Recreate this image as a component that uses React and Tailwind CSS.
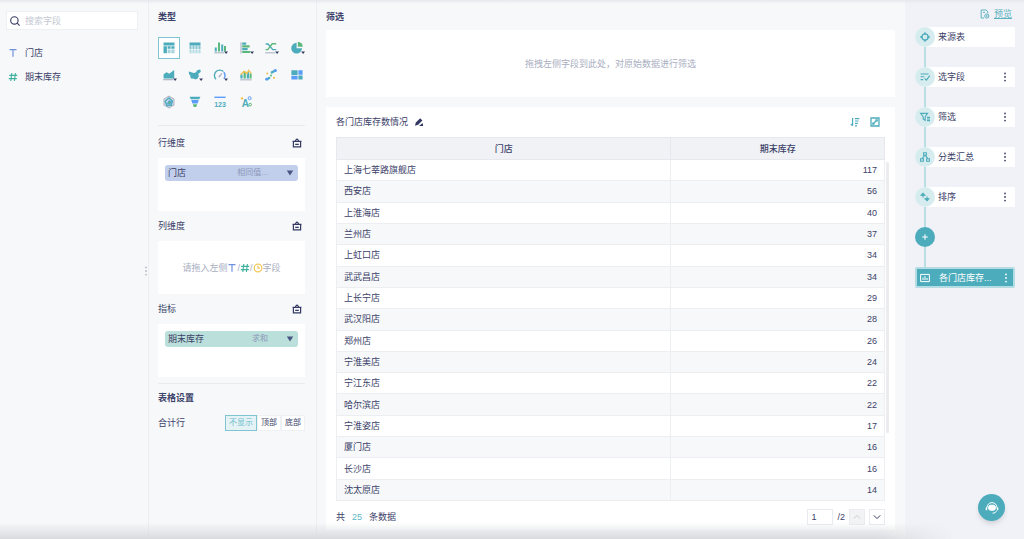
import React, { useState } from 'react';

const fieldList = [
  { name: '门店', kind: 'text' },
  { name: '期末库存', kind: 'number' },
];

const rows = [
  ['上海七莘路旗舰店', 117],
  ['西安店', 56],
  ['上淮海店', 40],
  ['兰州店', 37],
  ['上虹口店', 34],
  ['武武昌店', 34],
  ['上长宁店', 29],
  ['武汉阳店', 28],
  ['郑州店', 26],
  ['宁淮美店', 24],
  ['宁江东店', 22],
  ['哈尔滨店', 22],
  ['宁淮姿店', 17],
  ['厦门店', 16],
  ['长沙店', 16],
  ['沈太原店', 14],
];

const TEAL = '#4dacbc';
const GREEN = '#5cb87a';
const BLUE = '#5a9cf8';
const GRAY = '#b4b9c8';
const YELLOW = '#f2c04e';
const NAVY = '#343a63';

const chartTypes = [
  {
    name: '分组表',
    art: (
      <>
        <path d="M2.5 2.5h11v3h-11z" fill={TEAL} />
        <path d="M2.5 6.2h3.4v7h-3.4z" fill={TEAL} />
        <path d="M6.6 6.2h3v2.6h-3zM10.3 6.2h3.2v2.6h-3.2z" fill={TEAL} />
        <path d="M6.6 9.6h3v3.6h-3zM10.3 9.6h3.2v3.6h-3.2z" fill="#a6d5de" />
      </>
    ),
  },
  {
    name: '明细表',
    art: (
      <>
        <path d="M2.5 2.5h11v3h-11z" fill={TEAL} />
        <path d="M2.5 5.8h2v3.4h-2zM5.5 5.8h2v3.4h-2zM8.5 5.8h2v3.4h-2zM11.5 5.8h2v3.4h-2z" fill="#83c4cf" />
        <path d="M2.5 9.9h2v3.3h-2zM5.5 9.9h2v3.3h-2zM8.5 9.9h2v3.3h-2zM11.5 9.9h2v3.3h-2z" fill="#b3dbe2" />
      </>
    ),
  },
  {
    name: '柱形图',
    more: true,
    art: (
      <>
        <path d="M2.8 7.5h2v4h-2zM9.2 4.5h2v7h-2z" fill={TEAL} />
        <path d="M6 2.4h2v9.1h-2zM12 6h2v5.5h-2z" fill={GREEN} />
        <path d="M2.2 12.2h10v1.2h-10z" fill={GRAY} />
      </>
    ),
  },
  {
    name: '条形图',
    more: true,
    art: (
      <>
        <path d="M2.4 2.2h1.2v11.2h-1.2z" fill={GRAY} />
        <path d="M4.2 2.6h4v2.2h-4zM4.2 8.1h5.4v2.2h-5.4z" fill={TEAL} />
        <path d="M4.2 5.3h7.4v2.2h-7.4zM4.2 10.9h8v2.2h-8z" fill={GREEN} />
      </>
    ),
  },
  {
    name: '折线图',
    more: true,
    art: (
      <>
        <path d="M2.6 4h2.4l4.8 5.6h3.4" fill="none" stroke={TEAL} strokeWidth="1.4" />
        <path d="M2.6 9.6h2.2l4.4-5.8h4" fill="none" stroke={GREEN} strokeWidth="1.4" />
        <path d="M2.2 12.2h10v1.2h-10z" fill={GRAY} />
      </>
    ),
  },
  {
    name: '饼图',
    more: true,
    art: (
      <>
        <path d="M7.6 2.8v5.4h5.4a5.4 5.4 0 1 1-5.4-5.4z" fill={TEAL} />
        <path d="M8.8 1.8a5.2 5.2 0 0 1 5 5h-5z" fill={GREEN} />
      </>
    ),
  },
  {
    name: '面积图',
    more: true,
    art: (
      <>
        <path d="M2.6 11.4V7.2l3-2 2.6 1.6 5-3.8v8.4z" fill={TEAL} />
        <path d="M2.2 12h10v1.3h-10z" fill={GRAY} />
      </>
    ),
  },
  {
    name: '地图',
    more: true,
    art: (
      <path
        d="M1.8 4.6l2.6.6 2 .8 2.4-.6 1.4-2.2 2.6-.6 1.2 1.4-1 1.6-1.6 1.2.4 2.6-1.4 2.4-2.2.6-1.8-.8-1.8.2-1.4-1.8.2-1.4-1.4-1.4z"
        fill={TEAL}
      />
    ),
  },
  {
    name: '仪表盘',
    more: true,
    art: (
      <>
        <path d="M4 12.2a5.2 5.2 0 1 1 7.4-7.6" fill="none" stroke={TEAL} strokeWidth="1.4" />
        <path d="M11.8 5.2a5.2 5.2 0 0 1 0 6.4" fill="none" stroke={BLUE} strokeWidth="1.4" />
        <path d="M7.2 9.6l2.8-3" stroke={GRAY} strokeWidth="1.4" />
        <circle cx="7.4" cy="9.4" r="1" fill={GRAY} />
      </>
    ),
  },
  {
    name: '组合图',
    art: (
      <>
        <path d="M2.4 7.4h2.2v4.2h-2.2zM8.8 5h2.2v6.6h-2.2z" fill={TEAL} />
        <path d="M5.6 4.6h2.2v7h-2.2zM11.6 6.6h2v5h-2z" fill={GREEN} />
        <path d="M2.6 7.4l3.4-3 3 2.2 1.6-3.2 2.8 3" fill="none" stroke={YELLOW} strokeWidth="1.3" />
        <path d="M2.2 12.2h11.4v1.2h-11.4z" fill={GRAY} />
      </>
    ),
  },
  {
    name: '散点图',
    art: (
      <>
        <path d="M8.8 5.4l3.2-1.6M4 12.2l2.2-1.2" stroke={TEAL} strokeWidth="2.4" strokeLinecap="round" />
        <circle cx="12.4" cy="3.6" r="1.5" fill={BLUE} />
        <circle cx="3.6" cy="12.2" r="1.4" fill={BLUE} />
        <circle cx="4.2" cy="6.4" r="1" fill={YELLOW} />
        <circle cx="8" cy="8.6" r="1" fill={GREEN} />
        <circle cx="11" cy="10.8" r="1.1" fill={YELLOW} />
      </>
    ),
  },
  {
    name: '矩形树图',
    art: (
      <>
        <path d="M2.4 3.2h6.2v5h-6.2zM9.4 8.6h4.2v4h-4.2z" fill={TEAL} />
        <path d="M9.4 3.2h4.2v4.6h-4.2zM2.4 9h6.2v3.6h-6.2z" fill={BLUE} />
      </>
    ),
  },
  {
    name: '雷达图',
    art: (
      <>
        <path d="M8 2.2l5 2.9v5.8l-5 2.9-5-2.9v-5.8z" fill="#dfe3ee" stroke={GRAY} strokeWidth="1.1" />
        <path d="M8 4l3.4 3-1 4-4.4.6-1.8-4.4z" fill="none" stroke={TEAL} strokeWidth="1.5" />
        <path d="M8 6.4l2.6 1.2-1.4 2.8-3-.8z" fill={GREEN} stroke={BLUE} strokeWidth="0.8" />
      </>
    ),
  },
  {
    name: '漏斗图',
    art: (
      <>
        <path d="M2.6 2.8h10.8l-1.2 2.4h-8.4z" fill={TEAL} />
        <path d="M4.2 6h7.6l-1.2 3.4h-5.2z" fill={BLUE} />
        <path d="M5.8 10.2h4.4l-1 2.8h-2.4z" fill={GREEN} />
      </>
    ),
  },
  {
    name: '指标卡',
    art: (
      <>
        <path d="M2.4 2.6h11.2v1.4h-11.2z" fill={BLUE} />
        <text x="8" y="13" textAnchor="middle" fontSize="7" fontWeight="700" fill={TEAL}>
          123
        </text>
      </>
    ),
  },
  {
    name: '词云',
    art: (
      <>
        <text x="7.4" y="13" textAnchor="middle" fontSize="10" fontWeight="700" fill={TEAL}>
          A
        </text>
        <circle cx="4" cy="4.4" r="1.2" fill={YELLOW} />
        <circle cx="11.6" cy="4.2" r="1.5" fill="none" stroke={BLUE} />
        <circle cx="12.2" cy="10.6" r="1.3" fill="none" stroke={GREEN} />
      </>
    ),
  },
];

const steps = [
  {
    name: '来源表',
    menu: false,
    icon: (
      <>
        <circle cx="6" cy="6" r="3.1" strokeWidth="1.3" />
        <path d="M6 1.4v2M6 8.6v2M1.4 6h2M8.6 6h2" strokeWidth="1.8" />
      </>
    ),
  },
  {
    name: '选字段',
    menu: true,
    icon: <path d="M1.6 3h8M1.6 5.8h3.6M1.6 8.6h2.6M5.6 7.4l1.8 1.8 3.4-4.6" />,
  },
  {
    name: '筛选',
    menu: true,
    icon: (
      <>
        <path d="M1.6 2.4h7L6.2 5.6v3.8L4.2 8V5.6z" />
        <path d="M8 6.4h3M8 8h3M8 9.6h3" />
      </>
    ),
  },
  {
    name: '分类汇总',
    menu: true,
    icon: (
      <>
        <path d="M4.6 1.8h2.8v2.4h-2.8zM1.6 7.8h2.8v2.4h-2.8zM7.6 7.8h2.8v2.4h-2.8z" />
        <path d="M6 4.2L3 7.6M6 4.2l3 3.4" />
      </>
    ),
  },
  {
    name: '排序',
    menu: true,
    icon: (
      <path d="M4 2v4.4M2.2 4.2L4 2.2l1.8 2zM8 10V5.6M6.2 7.8L8 9.8l1.8-2z" fill="currentColor" />
    ),
  },
];

const TextIcon = () => (
  <svg className="h-2.5 w-2.5 shrink-0" viewBox="0 0 10 10" fill="none" stroke="#7090e0" strokeWidth="1.2">
    <path d="M1.5 1.7h7M5 1.7v7" />
  </svg>
);

const NumberIcon = () => (
  <svg className="h-2.5 w-2.5 shrink-0" viewBox="0 0 10 10" fill="none" stroke="#3fb09d" strokeWidth="1.1">
    <path d="M3.8 1L2.8 9M7.4 1l-1 8M1.2 3.4h8M.8 6.6h8" />
  </svg>
);

const ClockIcon = () => (
  <svg className="h-2.5 w-2.5 shrink-0" viewBox="0 0 10 10" fill="none" stroke="#f4c95d" strokeWidth="1.3">
    <circle cx="5" cy="5" r="3.8" />
    <path d="M5 2.8v2.4h2" />
  </svg>
);

const Caret = () => (
  <svg className="h-2 w-2 shrink-0" viewBox="0 0 8 8" fill="#4a5583">
    <path d="M.8 1.6h6.4L4 6.6z" />
  </svg>
);

const Dots = () => (
  <svg className="h-3 w-1" viewBox="0 0 4 12" fill="currentColor">
    <circle cx="2" cy="2.4" r="0.9" />
    <circle cx="2" cy="6" r="0.9" />
    <circle cx="2" cy="9.6" r="0.9" />
  </svg>
);

const DropZone = ({ title, children }) => (
  <section className="pl-[9px] pr-[11px]">
    <div className="flex h-[30px] items-center justify-between pr-[3px]">
      <h3>{title}</h3>
      <button type="button" aria-label={`清空${title}`}>
        <svg className="h-2.5 w-2.5" viewBox="0 0 10 10" fill="none" stroke={NAVY} strokeWidth="1.2">
          <path d="M3.2 2.6L5 1l1.8 1.6M.6 3.4h8.8" />
          <path d="M1.4 3.6v5.3h7.2V3.6M3.2 6.4h3.6" />
        </svg>
      </button>
    </div>
    <div className="h-[53px] bg-white p-[7px]">{children}</div>
  </section>
);

const FieldChip = ({ name, hint, className }) => (
  <div className={`flex h-4 items-center rounded-[3px] pl-[3px] pr-1 ${className}`}>
    <span>{name}</span>
    <span className="ml-auto mr-[18px] text-[8px] leading-4 text-[#8d99ba]">{hint}</span>
    <button type="button" aria-label={`${name}设置`}>
      <Caret />
    </button>
  </div>
);

const FieldPanel = () => (
  <aside className="w-[149px] shrink-0 border-r border-[#eceef2] pl-1.5 pr-2.5 pt-[11px]">
    <label className="flex h-[19px] items-center gap-1 border border-[#eef0f4] bg-white pl-[2px]">
      <svg className="h-3 w-3 shrink-0" viewBox="0 0 12 12" fill="none" stroke={NAVY} strokeWidth="1.1">
        <circle cx="5.4" cy="5.4" r="3.7" />
        <path d="M8.2 8.2l2.4 2.4" />
      </svg>
      <input
        type="text"
        aria-label="搜索字段"
        placeholder="搜索字段"
        className="w-full min-w-0 bg-transparent outline-none placeholder:text-[#c4c8d3]"
      />
    </label>
    <ul className="mt-[11px]">
      {fieldList.map((field) => (
        <li key={field.name} className="flex h-6 items-center gap-[7px] pl-[2px]">
          {field.kind === 'text' ? <TextIcon /> : <NumberIcon />}
          {field.name}
        </li>
      ))}
    </ul>
  </aside>
);

const ConfigPanel = () => {
  const [chart, setChart] = useState('分组表');
  const [total, setTotal] = useState('不显示');

  return (
    <aside className="relative w-[168px] shrink-0 border-r border-[#eceef2] pt-1">
      <span className="absolute -left-[5px] top-[265px] text-[#b4b9c8]">
        <Dots />
      </span>

      <h2 className="flex h-[26px] items-center px-[9px] font-bold">类型</h2>
      <div className="mt-[7px] grid grid-cols-6 gap-x-[3px] gap-y-[5px] pl-[9px] pr-2">
        {chartTypes.map(({ name, more, art }) => (
          <button
            key={name}
            type="button"
            aria-label={name}
            onClick={() => setChart(name)}
            className={`flex h-[22px] w-[22px] items-center justify-center border ${
              chart === name ? 'border-[#7fc4d0] bg-white' : 'border-transparent'
            }`}
          >
            <svg className="h-4 w-4 shrink-0" viewBox="0 0 16 16">
              {art}
              {more && <path d="M12.2 11.4h3.8L14.1 14z" fill={NAVY} />}
            </svg>
          </button>
        ))}
      </div>
      <hr className="ml-[9px] mr-[11px] mb-[2px] mt-3 border-[#e9ebef]" />

      <DropZone title="行维度">
        <FieldChip name="门店" hint="相同值..." className="bg-[#c2cfec]" />
      </DropZone>
      <DropZone title="列维度">
        <div className="flex h-full items-center justify-center text-[#a9aebf]">
          请拖入左侧
          <TextIcon />/<NumberIcon />/<ClockIcon />
          字段
        </div>
      </DropZone>
      <DropZone title="指标">
        <FieldChip name="期末库存" hint="求和" className="bg-[#bbdfda]" />
      </DropZone>

      <hr className="ml-[9px] mr-[11px] mt-1.5 border-[#e9ebef]" />
      <h2 className="flex h-7 items-center px-[9px] font-bold">表格设置</h2>
      <div className="flex h-[22px] items-center justify-between pl-[9px] pr-[11px]">
        <span>合计行</span>
        <div className="flex text-[8px]">
          {['不显示', '顶部', '底部'].map((item) => (
            <button
              key={item}
              type="button"
              aria-pressed={total === item}
              onClick={() => setTotal(item)}
              className={`h-4 border px-[3px] leading-3 ${
                total === item
                  ? 'border-[#7fc4d0] bg-[#e6f3f6] text-[#6dbdca]'
                  : 'border-[#eef0f4] bg-white'
              }`}
            >
              {item}
            </button>
          ))}
        </div>
      </div>
    </aside>
  );
};

const ResultTable = () => (
  <div className="flex min-h-0 flex-1">
    <table className="h-full flex-1 border-collapse border border-[#e9ebf0]">
      <thead>
        <tr className="h-[22px] bg-[#f0f2f6]">
          <th className="w-[61%] border border-[#e6e8ee] font-medium">门店</th>
          <th className="border border-[#e6e8ee] font-medium">期末库存</th>
        </tr>
      </thead>
      <tbody>
        {rows.map(([store, stock]) => (
          <tr key={store} className="even:bg-[#f6f8fa]">
            <td className="border border-[#eceef2] pl-[7px]">{store}</td>
            <td className="border border-[#eceef2] pr-[7px] text-right">{stock}</td>
          </tr>
        ))}
      </tbody>
    </table>
    <div className="w-2.5 pl-px pt-[25px]">
      <div className="h-4/5 w-[3px] rounded-full bg-[#ececef]" />
    </div>
  </div>
);

const MainPanel = () => (
  <main className="flex min-w-0 flex-1 flex-col pb-[9px] pl-[9px] pr-2.5 pt-1">
    <h2 className="flex h-[26px] items-center font-bold">筛选</h2>
    <div className="flex h-[67px] shrink-0 items-center justify-center bg-white text-[#a9aebf]">
      拖拽左侧字段到此处，对原始数据进行筛选
    </div>

    <section className="mt-2.5 flex min-h-0 flex-1 flex-col bg-white pl-2.5">
      <header className="flex h-[30px] shrink-0 items-center pr-[15px]">
        <h3>各门店库存数情况</h3>
        <button type="button" aria-label="重命名" className="ml-1.5">
          <svg className="h-2.5 w-2.5" viewBox="0 0 10 10" fill={NAVY}>
            <path d="M1 8.8l.8-3.2L6.2 1.2l2.2 2.2-4.2 4.4zM5 9l3.6-3 .6 3z" />
          </svg>
        </button>
        <button type="button" aria-label="排序" className="ml-auto">
          <svg className="h-2.5 w-2.5" viewBox="0 0 10 10" fill="none" stroke={TEAL} strokeWidth="1.2">
            <path d="M2.6 1v7.6M.8 6.8l1.8 2M4.8 1.6h4.6M5 4h3.6M5 6.4h2.8M5 8.8h2" />
          </svg>
        </button>
        <button type="button" aria-label="放大" className="ml-2.5">
          <svg className="h-2.5 w-2.5" viewBox="0 0 10 10" fill="none" stroke={TEAL} strokeWidth="1.3">
            <path d="M1 1h8v8H1zM5.4 2.8h1.8v1.8M2.8 5.4v1.8h1.8M7 3L3 7" />
          </svg>
        </button>
      </header>

      <ResultTable />

      <footer className="flex h-[29px] shrink-0 items-center pr-2.5 pt-[3px]">
        <span>共</span>
        <span className="mx-[7px] text-[#5cb8c6]">25</span>
        <span>条数据</span>
        <input
          type="text"
          aria-label="页码"
          defaultValue="1"
          className="ml-auto h-4 w-[26px] border border-[#e9ebf0] pl-[3px]"
        />
        <span className="mx-1">/2</span>
        <button
          type="button"
          aria-label="上一页"
          className="flex h-4 w-4 items-center justify-center border border-[#ececf0] bg-[#f2f3f5]"
        >
          <svg className="h-2 w-2" viewBox="0 0 8 8" fill="none" stroke="#c9ccd4">
            <path d="M.8 5.6L4 2.4l3.2 3.2" />
          </svg>
        </button>
        <button
          type="button"
          aria-label="下一页"
          className="ml-1 flex h-4 w-4 items-center justify-center border border-[#e9ebf0] bg-white"
        >
          <svg className="h-2 w-2" viewBox="0 0 8 8" fill="none" stroke={NAVY}>
            <path d="M.8 2.4L4 5.6l3.2-3.2" />
          </svg>
        </button>
      </footer>
    </section>
  </main>
);

const Connector = () => <div className="ml-[9px] h-5 w-[2px] bg-[#b9dee4]" />;

const StepPanel = () => (
  <aside className="w-[119px] shrink-0 bg-[#f0f2f7] pl-2.5 pr-[9px] pt-[7px]">
    <div className="flex h-5 items-start justify-end gap-1 pr-[3px] text-[#5cb3c1]">
      <svg className="mt-[2px] h-2.5 w-2.5" viewBox="0 0 10 10" fill="none" stroke="currentColor">
        <path d="M4 9H1.2V1h5l1.6 1.8v1.4M3 3.4h2" />
        <circle cx="6.8" cy="7" r="2.1" />
        <circle cx="6.8" cy="7" r="0.5" />
      </svg>
      <a href="#preview" className="underline">
        预览
      </a>
    </div>

    {steps.map(({ name, menu, icon }) => (
      <React.Fragment key={name}>
        <div className="flex h-5 items-center rounded-l-full bg-white">
          <span className="flex h-5 w-5 shrink-0 items-center justify-center rounded-full bg-[#d7ecee] text-[#4dacbc]">
            <svg className="h-3 w-3" viewBox="0 0 12 12" fill="none" stroke="currentColor" strokeWidth="1.1">
              {icon}
            </svg>
          </span>
          <span className="ml-[3px]">{name}</span>
          {menu && (
            <button type="button" aria-label={`${name}操作`} className="ml-auto mr-2">
              <Dots />
            </button>
          )}
        </div>
        <Connector />
      </React.Fragment>
    ))}

    <button
      type="button"
      aria-label="添加步骤"
      className="flex h-5 w-5 items-center justify-center rounded-full bg-[#4dacbc] text-white"
    >
      <svg className="h-2 w-2" viewBox="0 0 8 8" stroke="currentColor">
        <path d="M4 1.2v5.6M1.2 4h5.6" />
      </svg>
    </button>
    <Connector />

    <div className="flex h-[21px] items-center rounded-[2px] border-2 border-[#b4dce2] bg-[#4dacbc] pl-[3px] text-white">
      <svg className="h-2.5 w-2.5 shrink-0" viewBox="0 0 10 10" fill="none" stroke="currentColor">
        <path d="M.6 1.4h8.8v7.2H.6zM3 7V4.6M5 7V3.2M7 7V5" />
      </svg>
      <span className="ml-[9px] whitespace-nowrap">各门店库存...</span>
      <button type="button" aria-label="组件操作" className="ml-auto mr-[5px]">
        <Dots />
      </button>
    </div>
  </aside>
);

const App = () => (
  <div className="relative flex h-screen overflow-hidden bg-[#f6f8fa] font-['Liberation_Sans','Noto_Sans_CJK_SC',sans-serif] text-[9px] leading-[14px] text-[#3b4168]">
    <FieldPanel />
    <ConfigPanel />
    <MainPanel />
    <StepPanel />

    {/* edge shadows */}
    <div className="pointer-events-none absolute inset-x-0 top-0 h-1 bg-gradient-to-b from-[#e6e8ed] to-transparent" />
    <div className="pointer-events-none absolute bottom-0 left-0 right-[70px] h-4 bg-gradient-to-b from-transparent to-[#d8dadd] [mask-image:linear-gradient(to_right,black_92%,transparent)]" />

    <button
      type="button"
      aria-label="在线客服"
      className="absolute bottom-[18px] right-[19px] flex h-[27px] w-[27px] items-center justify-center rounded-full bg-[#4dacbc] text-white shadow-md"
    >
      <svg className="h-3.5 w-3.5" viewBox="0 0 14 14" fill="none" stroke="currentColor">
        <path d="M2 7.4V6.6a5 5 0 0 1 10 0v.8M11.8 9.4c-.6 1.8-2.2 2.8-4.2 2.8" />
        <rect x="3.6" y="4.2" width="6.8" height="5" rx="2" fill="currentColor" />
        <path d="M1.4 6.4v2.8M12.6 6.4v2.8" strokeWidth="1.4" />
      </svg>
    </button>
  </div>
);

export default App;
